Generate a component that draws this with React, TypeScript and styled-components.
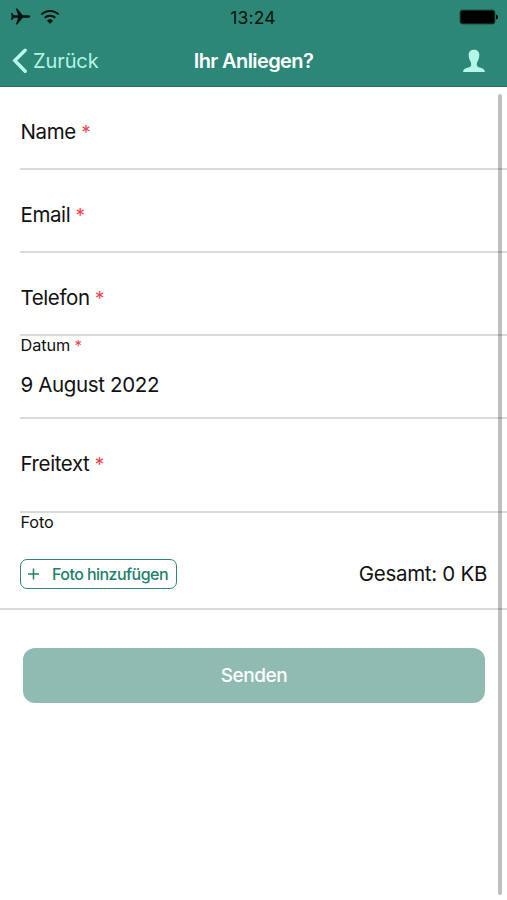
import React from 'react';
import styled, { createGlobalStyle } from 'styled-components';

const GlobalStyle = createGlobalStyle`
  *, *::before, *::after { box-sizing: border-box; }
  html, body, #root { height: 100%; }
  body {
    margin: 0;
    background: #fff;
    color: #111;
    font-family: Inter, "Liberation Sans", sans-serif;
    overflow: hidden;
  }
  button { font-family: inherit; margin: 0; padding: 0; }
`;

const Screen = styled.div`
  position: relative;
  width: 507px;
  height: 900px;
  display: flex;
  flex-direction: column;
  background: #fff;
`;

const Header = styled.header`
  height: 87px;
  flex: none;
  display: flex;
  flex-direction: column;
  background: #2d8777;
  border-bottom: 1px solid #267364;
`;

const StatusBar = styled.div`
  height: 35px;
  display: grid;
  grid-template-columns: 1fr auto 1fr;
  align-items: center;
  padding: 0 8px 0 10px;
  color: #07110f;
`;

const StatusIcons = styled.div`
  display: flex;
  align-items: center;
  gap: 9px;
  padding-bottom: 2px;
`;

const Clock = styled.time`
  margin-right: 3px;
  font-size: 17.5px;
  line-height: 35px;
  letter-spacing: 0.2px;
`;

const BatterySlot = styled.div`
  display: flex;
  justify-content: flex-end;
  padding-bottom: 1px;
`;

const NavBar = styled.nav`
  height: 51px;
  display: grid;
  grid-template-columns: 1fr auto 1fr;
  align-items: center;
  padding: 0 22px 0 12px;
`;

const BackButton = styled.button`
  display: flex;
  align-items: center;
  gap: 5px;
  border: 0;
  background: none;
  color: #b4f4e5;
  font-size: 20px;
  line-height: 26px;
  letter-spacing: -0.1px;
`;

const Title = styled.h1`
  margin: 0 0 0 10px;
  color: #fff;
  font-size: 20px;
  font-weight: 600;
  line-height: 26px;
  letter-spacing: -0.6px;
`;

const ProfileButton = styled.button`
  display: flex;
  justify-self: end;
  border: 0;
  background: none;
`;

const Form = styled.form`
  display: flex;
  flex-direction: column;
`;

const Field = styled.div<{ $height: number }>`
  height: ${(p) => p.$height}px;
  margin-left: 20px;
  display: flex;
  align-items: flex-start;
  border-bottom: 2px solid #dadada;
`;

const StackedField = styled.div<{ $height: number; $full?: boolean }>`
  height: ${(p) => p.$height}px;
  margin-left: ${(p) => (p.$full ? 0 : 20)}px;
  padding-left: ${(p) => (p.$full ? 20 : 0)}px;
  display: flex;
  flex-direction: column;
  border-bottom: 2px solid #dadada;
`;

const Label = styled.label`
  padding: 32px 0 0 0.5px;
  font-size: 20.5px;
  line-height: 26px;
  letter-spacing: -0.4px;
  white-space: pre;
`;

const SmallLabel = styled.label`
  padding-left: 0.5px;
  font-size: 16.3px;
  line-height: 19px;
  letter-spacing: -0.1px;
  white-space: pre;
`;

const Required = styled.span`
  color: #f5404c;
  font-size: 0.92em;
`;

const DateValue = styled.div`
  margin-top: 17px;
  padding-left: 0.5px;
  font-size: 20.5px;
  line-height: 26px;
  letter-spacing: -0.35px;
`;

const PhotoRow = styled.div`
  margin-top: 27px;
  padding-right: 20px;
  display: flex;
  align-items: center;
  justify-content: space-between;
`;

const AddPhoto = styled.button`
  width: 157px;
  height: 30px;
  display: flex;
  align-items: center;
  padding-left: 7px;
  gap: 13px;
  border: 1.5px solid #2d8777;
  border-radius: 7px;
  background: #fff;
  color: #23806c;
  font-size: 16px;
  font-weight: 500;
  letter-spacing: -0.55px;
  white-space: nowrap;
`;

const Total = styled.span`
  font-size: 20.5px;
  line-height: 26px;
  letter-spacing: -0.3px;
`;

const Submit = styled.button`
  width: 462px;
  height: 55px;
  margin: 38px 0 0 23px;
  border: 0;
  border-radius: 12px;
  background: #8fbbb3;
  color: #fff;
  font-size: 19px;
  font-weight: 500;
  letter-spacing: -0.45px;
`;

const ScrollThumb = styled.div`
  position: absolute;
  top: 94px;
  right: 5px;
  width: 4px;
  height: 801px;
  border-radius: 2px;
  background: rgba(0, 0, 0, 0.25);
`;

const Plane = () => (
  <svg width="21" height="19" viewBox="0 0 21 19" fill="currentColor">
    <path d="M20.2 9.5c0-.9-1.1-1.3-2.4-1.3h-5L7.200 1.500H5.800l2.400 6.700H4L2.200 6H1l.7 3.500L1 13h1.200L4 10.800h4.200l-2.400 6.700h1.400l5.600-6.700h5c1.300 0 2.400-.4 2.400-1.300z" />
  </svg>
);

const Wifi = () => (
  <svg width="20" height="16" viewBox="0 0 20 16" fill="none" stroke="currentColor" strokeWidth="2">
    <path d="M1.400 5.400a12.300 12.300 0 0 1 17.200 0" />
    <path d="M4.700 8.800a7.600 7.600 0 0 1 10.600 0" />
    <path d="M7 11.700a4.300 4.300 0 0 1 6 0l-3 3z" fill="currentColor" stroke="none" />
  </svg>
);

const Battery = () => (
  <svg width="40" height="16" viewBox="0 0 40 16">
    <rect x="1" y="1" width="35" height="14" rx="2.500" fill="#000" stroke="#175044" strokeWidth="1" />
    <path d="M37 5.400c1.300.3 2 1.300 2 2.600s-.7 2.300-2 2.600z" fill="#000" />
  </svg>
);

const Chevron = () => (
  <svg width="16" height="26" viewBox="0 0 16 26" fill="none" stroke="#b9faee" strokeWidth="3.400" strokeLinecap="round" strokeLinejoin="miter">
    <path d="M13.200 2.200 2.800 12.500l10.400 10.800" />
  </svg>
);

const Profile = () => (
  <svg width="22" height="24" viewBox="0 0 22 24" fill="#b4f7e9">
    <path d="M11 .8c-3.400 0-5.300 2-5.300 5.200 0 2 .4 4.100 1.500 6 .8 1.300 1 2 1 3.200 0 1.800-.6 2.600-2.700 3.300C2 19.500.3 20 .1 23h21.800c-.2-3-1.900-3.500-5.400-4.500-2.100-.7-2.700-1.500-2.700-3.300 0-1.200.2-1.900 1-3.200 1.100-1.900 1.500-4 1.500-6C16.300 2.800 14.400.8 11 .8z" />
  </svg>
);

const Plus = () => (
  <svg width="11" height="12" viewBox="0 0 11 12" stroke="currentColor" strokeWidth="1.500">
    <path d="M5.500 .5v11M0 6h11" />
  </svg>
);

export default function App() {
  return (
    <>
      <GlobalStyle />
      <Screen>
        <Header>
          <StatusBar>
            <StatusIcons>
              <Plane />
              <Wifi />
            </StatusIcons>
            <Clock>13:24</Clock>
            <BatterySlot>
              <Battery />
            </BatterySlot>
          </StatusBar>
          <NavBar>
            <BackButton type="button">
              <Chevron />
              Zurück
            </BackButton>
            <Title>Ihr Anliegen?</Title>
            <ProfileButton type="button" aria-label="Profil">
              <Profile />
            </ProfileButton>
          </NavBar>
        </Header>
        <Form>
          <Field $height={83}>
            <Label>Name <Required>*</Required></Label>
          </Field>
          <Field $height={83}>
            <Label>Email <Required>*</Required></Label>
          </Field>
          <Field $height={83}>
            <Label>Telefon <Required>*</Required></Label>
          </Field>
          <StackedField $height={83}>
            <SmallLabel>Datum <Required>*</Required></SmallLabel>
            <DateValue>9 August 2022</DateValue>
          </StackedField>
          <Field $height={94}>
            <Label>Freitext <Required>*</Required></Label>
          </Field>
          <StackedField $height={97} $full>
            <SmallLabel>Foto</SmallLabel>
            <PhotoRow>
              <AddPhoto type="button">
                <Plus />
                Foto hinzufügen
              </AddPhoto>
              <Total>Gesamt: 0 KB</Total>
            </PhotoRow>
          </StackedField>
          <Submit type="button">Senden</Submit>
        </Form>
        <ScrollThumb />
      </Screen>
    </>
  );
}
